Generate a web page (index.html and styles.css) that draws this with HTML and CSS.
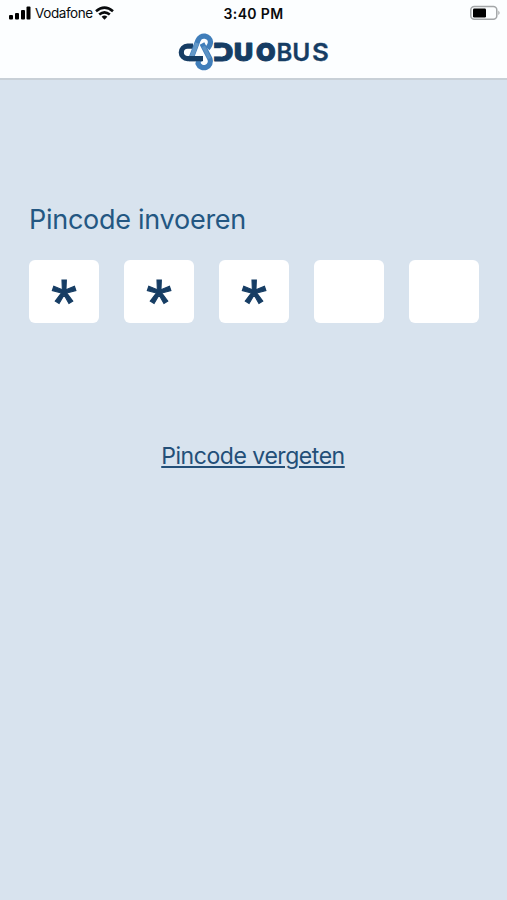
FILE: index.html
```html
<!DOCTYPE html>
<html lang="nl">
<head>
<meta charset="utf-8">
<meta name="viewport" content="width=device-width, initial-scale=1">
<title>Duobus</title>
<link rel="stylesheet" href="styles.css">
</head>
<body>
<header class="top">
  <div class="status">
    <div class="carrier">
      <svg class="signal" width="22" height="14" viewBox="0 0 22 14"><rect x="0" y="9" width="4" height="4.5" rx="1"/><rect x="6" y="7" width="4" height="6.5" rx="1"/><rect x="12" y="4" width="4" height="9.5" rx="1"/><rect x="17.5" y="0.5" width="4" height="13" rx="1"/></svg>
      <span class="carrier-name">Vodafone</span>
      <svg class="wifi" width="19" height="14" viewBox="0 0 19 14" fill="none" stroke="#080b0d" stroke-width="2.6"><path d="M1 5.3Q9.5-2 18 5.3M4.2 8.6Q9.5 4 14.8 8.6"/><path d="M6.6 10.7Q9.5 8.5 12.4 10.7L9.5 13.7Z" fill="#080b0d" stroke="none"/></svg>
    </div>
    <time class="clock">3:40 PM</time>
    <svg class="battery" width="32" height="16" viewBox="0 0 32 16"><rect x="1.8" y="1.6" width="26" height="12.6" rx="3.5" fill="none" stroke="#a3a6a8" stroke-width="1.5"/><rect x="4" y="3.6" width="13" height="8.8" rx="1.2"/><path d="M29.3 5.5Q32 7.8 29.3 10Z" fill="#a3a6a8"/></svg>
  </div>
  <svg class="logo" width="152" height="40" viewBox="178 32 152 40" role="img">
    <g fill="none" stroke-linejoin="round">
      <path d="M193 46.2H187.5A6.2 6.2 0 0 0 187.5 58.6H202" stroke="#163d64" stroke-width="5.2"/>
      <path d="M202 43.5L210 59A6.4 6.4 0 1 1 198 63.5Q198.2 60.5 201 57.5" stroke="#407eba" stroke-width="5.2"/>
      <path d="M191.2 58L198 40.2A6.5 6.5 0 0 1 210.5 42Q210.5 45 207.5 48.5" stroke="#407eba" stroke-width="5.2"/>
      <path d="M197 43L191.4 57.5" stroke="#6398c8" stroke-width="4"/>
      <path d="M203.5 46.5L209.5 58.5" stroke="#5b92c4" stroke-width="3.4"/>
      <path d="M189 58.6H203" stroke="#163d64" stroke-width="5.2"/>
    </g>
    <g class="duo">
      <text transform="translate(213.2 61.4) scale(1.15 1.03)">D</text>
      <rect x="212" y="48.2" width="10.5" height="8.2" fill="#fcfeff"/>
      <text transform="translate(233.9 61.4) scale(1.1 1.03)">U</text>
      <text transform="translate(256 61.4) scale(1.05 1.03)">O</text>
    </g>
    <g class="bus"><text transform="translate(276.6 61.4) scale(1 1.03)">B</text><text transform="translate(292.2 61.4) scale(1.02 1.03)">U</text><text transform="translate(312 61.4) scale(1.08 1.03)">S</text></g>
  </svg>
</header>
<main class="content">
  <h1 class="title">Pincode invoeren</h1>
  <div class="pin">
    <div class="cell">*</div>
    <div class="cell">*</div>
    <div class="cell">*</div>
    <div class="cell"></div>
    <div class="cell"></div>
  </div>
  <a class="forgot" href="#">Pincode vergeten</a>
</main>
</body>
</html>
```
FILE: styles.css
```css
* { box-sizing: border-box; }
body { margin: 0; min-height: 900px; background: #d8e3ee; font-family: Inter, "Liberation Sans", sans-serif; }
.top { height: 80px; background: #fcfeff; border-bottom: 2px solid #c8d0d7; }
.status { height: 32px; display: grid; grid-template-columns: 1fr auto 1fr; padding: 5px 6px 0 9px; color: #080b0d; }
.carrier { display: flex; height: 17px; align-items: center; }
.signal, .wifi { margin-bottom: 2px; }
.carrier-name { margin-left: 4px; font-size: 13.5px; letter-spacing: -0.42px; line-height: 17px; }
.wifi { margin-left: 2px; }
.clock { margin-right: 3px; font-size: 14px; font-weight: 600; line-height: 17px; letter-spacing: 0.35px; }
.battery { justify-self: end; }
.logo { display: block; margin: 0 0 0 178px; }
.duo text { font: 900 24px Inter, sans-serif; fill: #163d64; stroke: #163d64; stroke-width: 0.9px; stroke-linejoin: round; }
.bus text { font: 600 24px Inter, sans-serif; fill: #163d64; stroke: #163d64; stroke-width: 0.3px; }
.content { padding: 120px 28px 0 29px; display: flex; flex-direction: column; }
.title { margin: 0; font-size: 27px; font-weight: 400; line-height: 40px; letter-spacing: -0.27px; color: #235782; }
.pin { display: grid; grid-template-columns: repeat(5, 70px); justify-content: space-between; margin-top: 20px; }
.cell { height: 63px; border-radius: 6px; background: #fff; text-align: center; color: #163d64; font-family: "Liberation Sans", sans-serif; font-size: 66px; line-height: 86px; -webkit-text-stroke: 1.1px #163d64; }
.forgot { align-self: center; margin: 118px 2px 0 0; font-size: 23px; line-height: 30px; letter-spacing: -0.45px; color: #234f78; text-decoration-thickness: 2px; text-underline-offset: 2px; }
```
